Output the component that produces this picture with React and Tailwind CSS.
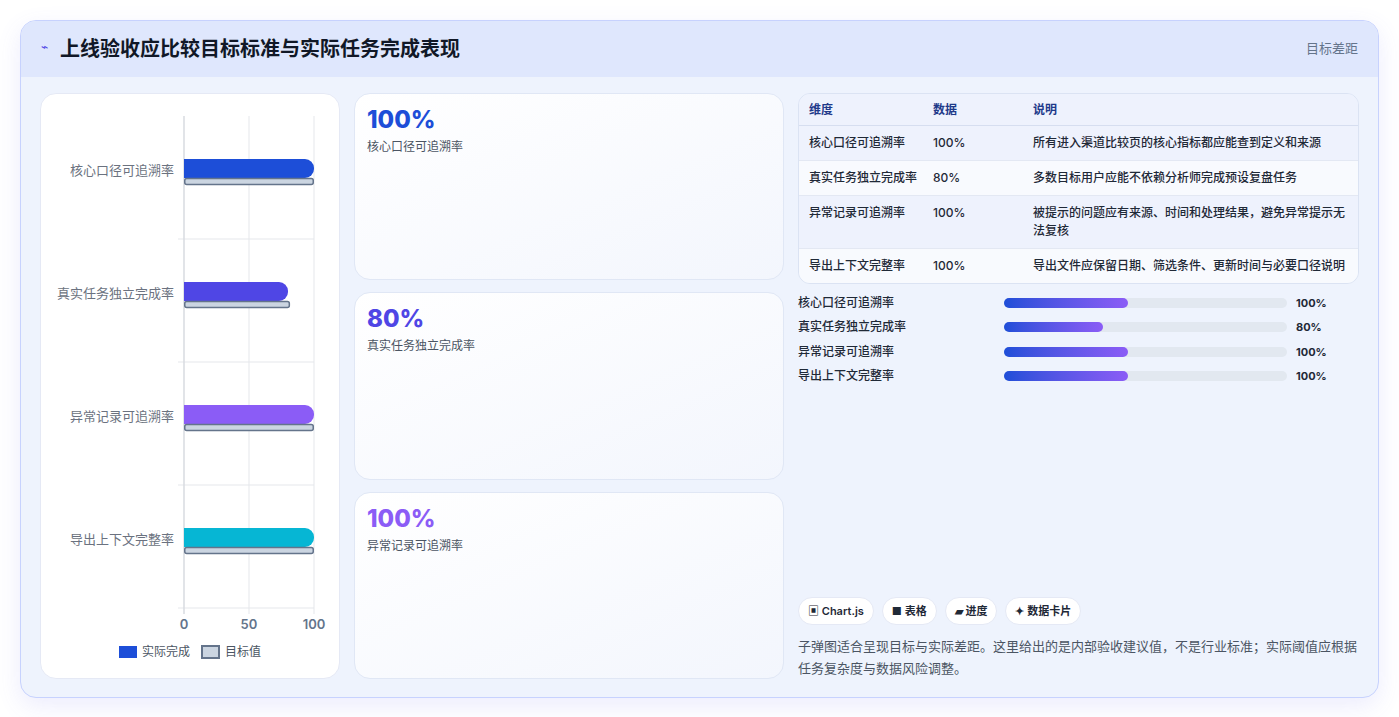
const font = { fontFamily: '"Inter","Noto Sans CJK SC",sans-serif' };

const rows = [
  { name: "核心口径可追溯率", v: 100, color: "#1d4ed8", desc: "所有进入渠道比较页的核心指标都应能查到定义和来源" },
  { name: "真实任务独立完成率", v: 80, color: "#4f46e5", desc: "多数目标用户应能不依赖分析师完成预设复盘任务" },
  { name: "异常记录可追溯率", v: 100, color: "#8b5cf6", desc: "被提示的问题应有来源、时间和处理结果，避免异常提示无法复核" },
  { name: "导出上下文完整率", v: 100, color: "#06b6d4", desc: "导出文件应保留日期、筛选条件、更新时间与必要口径说明" },
];

function Chart() {
  const x0 = 143, w = 130, top = 22, band = 123;
  return (
    <svg width="298" height="584" viewBox="0 0 298 584" style={font}>
      {[0, 1, 2, 3].map((i) => (
        <line key={i} x1={x0 - 6} x2={x0 + w} y1={top + band * (i + 1)} y2={top + band * (i + 1)} stroke="#e5e7eb" />
      ))}
      {[0, 0.5, 1].map((f, i) => (
        <line key={i} x1={x0 + w * f} x2={x0 + w * f} y1={top} y2={top + band * 4 + 6} stroke="#e5e7eb" />
      ))}
      <line x1={x0} x2={x0} y1={top} y2={top + band * 4 + 6} stroke="#d1d5db" />
      {rows.map((r, i) => {
        const cy = top + band * i + 53;
        const bw = w * r.v / 100;
        return (
          <g key={i}>
            <text x={x0 - 10} y={cy + 6} textAnchor="end" fontSize="13" fill="#6b7280">{r.name}</text>
            <path d={`M${x0} ${cy - 10} H${x0 + bw - 9} a9 9 0 0 1 9 9 v1 a9 9 0 0 1 -9 9 H${x0} Z`} fill={r.color} />
            <rect x={x0 + 0.75} y={cy + 9.5} width={bw * (r.v === 80 ? 1.02 : 1) - 1.5} height={6} rx={2} fill="#cbd5e1" stroke="#64748b" strokeWidth="1.5" />
          </g>
        );
      })}
      {[0, 50, 100].map((t, i) => (
        <text key={t} x={x0 + w * i / 2} y={535} textAnchor="middle" fontSize="13" fontWeight="600" fill="#64748b">{t}</text>
      ))}
      <rect x={78} y={552} width={18} height={12} fill="#1d4ed8" />
      <text x={101} y={562} fontSize="12" fill="#4b5563">实际完成</text>
      <rect x={161} y={552} width={17} height={12} fill="#cbd5e1" stroke="#64748b" strokeWidth="2" />
      <text x={184} y={562} fontSize="12" fill="#4b5563">目标值</text>
    </svg>
  );
}

export default function App() {
  return (
    <div className="w-[1399px] h-[717px] bg-white pt-5 pl-5" style={font}>
      <div className="w-[1359px] h-[678px] rounded-2xl border border-[#c7d2fe] bg-[#eef3fd] shadow-[0_8px_24px_rgba(99,102,241,0.12)] flex flex-col overflow-hidden">
        <div className="h-[56px] shrink-0 bg-[#dfe7fd] flex items-center justify-between px-5">
          <div className="flex items-center gap-3">
            <span className="text-[#4f46e5] text-[12px] -mt-1">⌁</span>
            <span className="text-[20px] font-bold text-[#111827]">上线验收应比较目标标准与实际任务完成表现</span>
          </div>
          <span className="text-[13px] text-[#64748b]">目标差距</span>
        </div>
        <div className="flex-1 flex gap-[14px] p-[19px] pt-4">
          <div className="w-[300px] rounded-2xl bg-white border border-[#e5e9f5] flex items-start">
            <Chart />
          </div>
          <div className="w-[430px] flex flex-col gap-3">
            {rows.slice(0, 3).map((r) => (
              <div key={r.name} className="flex-1 rounded-2xl border border-[#e0e7f5] bg-gradient-to-br from-white to-[#f3f6fd] px-[12px] py-3">
                <div className="text-[24px] font-extrabold leading-7" style={{ color: r.color }}>{r.v}%</div>
                <div className="text-[12px] text-[#4b5563] mt-1">{r.name}</div>
              </div>
            ))}
          </div>
          <div className="flex-1 flex flex-col">
            <div className="rounded-xl border border-[#dbe3f3] overflow-hidden text-[12px]">
              <div className="flex bg-[#eef2fd] border-b border-[#d6def0] font-semibold text-[#1e3a8a] h-[32px] items-center">
                <div className="w-[134px] pl-[10px]">维度</div>
                <div className="w-[100px]">数据</div>
                <div className="flex-1">说明</div>
              </div>
              {rows.map((r, i) => (
                <div key={r.name} className={`flex py-[8px] leading-[18px] text-[#1f2937] ${i % 2 ? "bg-[#f8fafe]" : "bg-[#eef2fd]"} ${i < 3 ? "border-b border-[#e3e8f3]" : ""}`}>
                  <div className="w-[134px] pl-[10px] font-medium">{r.name}</div>
                  <div className="w-[100px] font-medium">{r.v}%</div>
                  <div className="flex-1 pr-3 font-medium">{r.desc}</div>
                </div>
              ))}
            </div>
            <div className="mt-[10px] flex flex-col gap-[7px]">
              {rows.map((r) => (
                <div key={r.name} className="flex items-center h-[17.5px] text-[12px] font-medium text-[#1f2937]">
                  <div className="w-[206px]">{r.name}</div>
                  <div className="w-[283px] h-[10px] rounded-full bg-[#e2e8f0]">
                    <div className="h-full rounded-full bg-gradient-to-r from-[#1d4ed8] to-[#8b5cf6]" style={{ width: r.v * 1.24 }} />
                  </div>
                  <div className="ml-[9px] text-[11px] font-bold">{r.v}%</div>
                </div>
              ))}
            </div>
            <div className="flex-1" />
            <div className="flex gap-[8px] text-[11px] font-semibold text-[#1f2937]">
              {["▣ Chart.js", "■ 表格", "▰ 进度", "✦ 数据卡片"].map((t) => (
                <span key={t} className="px-[9px] h-[28px] flex items-center rounded-full bg-white border border-[#e5e9f5]">{t}</span>
              ))}
            </div>
            <p className="mt-[10px] text-[13px] leading-[22px] text-[#4b5563]">
              子弹图适合呈现目标与实际差距。这里给出的是内部验收建议值，不是行业标准；实际阈值应根据任务复杂度与数据风险调整。
            </p>
          </div>
        </div>
      </div>
    </div>
  );
}
